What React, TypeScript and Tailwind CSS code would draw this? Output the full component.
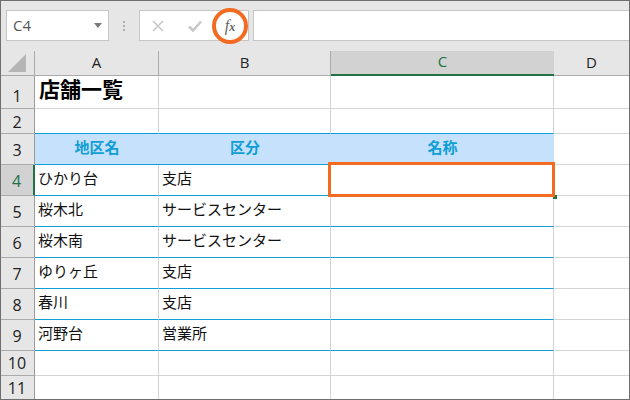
const jp = { fontFamily: '"Noto Sans CJK JP", sans-serif' };

const columns = ["A", "B", "C", "D"];

const rows = [
  ["ひかり台", "支店"],
  ["桜木北", "サービスセンター"],
  ["桜木南", "サービスセンター"],
  ["ゆりヶ丘", "支店"],
  ["春川", "支店"],
  ["河野台", "営業所"],
];

function RowHead({ n, active, low }: { n: number; active?: boolean; low?: boolean }) {
  return (
    <div
      className={
        "flex justify-center border-b border-[#ababab] text-base " +
        (low ? "items-end " : "items-center ") +
        (n < 10 && !low ? "pt-0.5 " : "") +
        (active
          ? "border-r-2 border-r-[#217346] bg-[#d2d2d2] text-[#217346]"
          : "border-r border-r-[#9c9c9c] bg-[#e6e6e6] text-[#222]")
      }
    >
      {n}
    </div>
  );
}

function Cell({ blue, title, children, className = "" }: { blue?: boolean; title?: boolean; children?: React.ReactNode; className?: string }) {
  return (
    <div
      style={jp}
      className={
        "flex items-center border-r border-r-[#d4d4d4] border-b " +
        (title ? "pb-1.5 pl-1 text-[21px] font-bold text-black " : "pb-1 pl-0.75 text-[15px] text-[#111] ") +
        (blue ? "border-b-[#0f9ed5] " : "border-b-[#d4d4d4] ") +
        className
      }
    >
      {children}
    </div>
  );
}

function HeadCell({ children }: { children: React.ReactNode }) {
  return (
    <div style={jp} className="flex items-center justify-center border-b border-[#0f9ed5] bg-[#c5e1fb] pb-1 text-[15px] font-bold text-[#0f9ed5]">
      {children}
    </div>
  );
}

export default function App() {
  return (
    <div className="relative flex h-screen w-full flex-col overflow-hidden bg-[#e6e6e6]" style={{ fontFamily: '"Open Sans", sans-serif' }}>
      <div className="mt-2.5 mb-2.5 flex h-[31px] shrink-0 items-stretch">
        <div className="ml-1.5 flex w-[103px] items-center justify-between border border-[#c6c6c6] bg-white pr-1.5 pl-1.5 text-[15px] text-[#555]">
          <span>C4</span>
          <svg width="8" height="5" viewBox="0 0 8 5"><path d="M0 0h8L4 5z" fill="#7a7a7a" /></svg>
        </div>
        <div className="flex w-[30px] flex-col items-center justify-center gap-0.5">
          <span className="size-0.5 bg-[#b0b0b0]" />
          <span className="size-0.5 bg-[#b0b0b0]" />
          <span className="size-0.5 bg-[#b0b0b0]" />
        </div>
        <div className="relative flex w-[110px] items-center border border-[#c6c6c6] bg-white">
          <svg className="ml-3" width="12" height="12" viewBox="0 0 12 12">
            <path d="M1 1l10 10M11 1L1 11" stroke="#c8c8c8" strokeWidth="1.6" fill="none" />
          </svg>
          <svg className="ml-6" width="14" height="12" viewBox="0 0 14 12">
            <path d="M1 6.5l4 4 8-9" stroke="#c8c8c8" strokeWidth="2.6" fill="none" />
          </svg>
          <span className="absolute right-0 flex size-9 items-center justify-center rounded-full border-4 border-[#f26b21]">
            <span className="text-base text-[#666] italic" style={{ fontFamily: '"Liberation Serif", serif' }}>
              f<span className="text-xs font-bold">x</span>
            </span>
          </span>
        </div>
        <div className="ml-1 flex-1 border-y border-l border-[#c6c6c6] bg-white" />
      </div>

      <div className="grid flex-1 grid-cols-[35px_124px_172px_223px_1fr] grid-rows-[25px_33px_25px_repeat(7,31px)_25px_1fr] bg-white">
        <div className="flex items-center justify-center border-r border-b border-[#ababab] bg-[#e6e6e6]">
          <svg width="18" height="18" viewBox="0 0 18 18"><path d="M18 0v18H0z" fill="#b5b5b5" /></svg>
        </div>
        {columns.map((c) =>
          c === "C" ? (
            <div key={c} className="flex items-center justify-center border-b-2 border-[#217346] bg-[#d2d2d2] pb-0.5 text-[15px] text-[#217346]">
              {c}
            </div>
          ) : (
            <div key={c} className="flex items-center justify-center border-r border-b border-[#ababab] bg-[#e6e6e6] pb-0.5 text-[15px] text-[#222]">
              {c}
            </div>
          ),
        )}

        <RowHead n={1} low />
        <Cell title>店舗一覧</Cell>
        <Cell />
        <Cell />
        <Cell />

        <RowHead n={2} />
        <Cell blue />
        <Cell blue />
        <Cell blue />
        <Cell />

        <RowHead n={3} />
        <HeadCell>地区名</HeadCell>
        <HeadCell>区分</HeadCell>
        <HeadCell>名称</HeadCell>
        <Cell />

        {rows.map((r, i) => (
          <div key={r[0]} className="contents">
            <RowHead n={i + 4} active={i === 0} />
            <Cell blue>{r[0]}</Cell>
            <Cell blue>{r[1]}</Cell>
            <Cell blue className={i === 0 ? "relative" : ""}>
              {i === 0 && (
                <>
                  <span className="absolute -right-0.5 -bottom-0.5 z-10 size-1 translate-x-0.5 translate-y-0.5 bg-[#217346]" />
                  <span className="absolute -top-0.75 -right-0.5 -bottom-0.5 -left-0.75 z-10 border-3 border-[#f26b21]" />
                </>
              )}
            </Cell>
            <Cell />
          </div>
        ))}

        {[10, 11].map((n) => (
          <div key={n} className="contents">
            <RowHead n={n} />
            <Cell />
            <Cell />
            <Cell />
            <Cell />
          </div>
        ))}
      </div>

      <div className="pointer-events-none absolute inset-0 border border-[#6e6e6e]" />
    </div>
  );
}
